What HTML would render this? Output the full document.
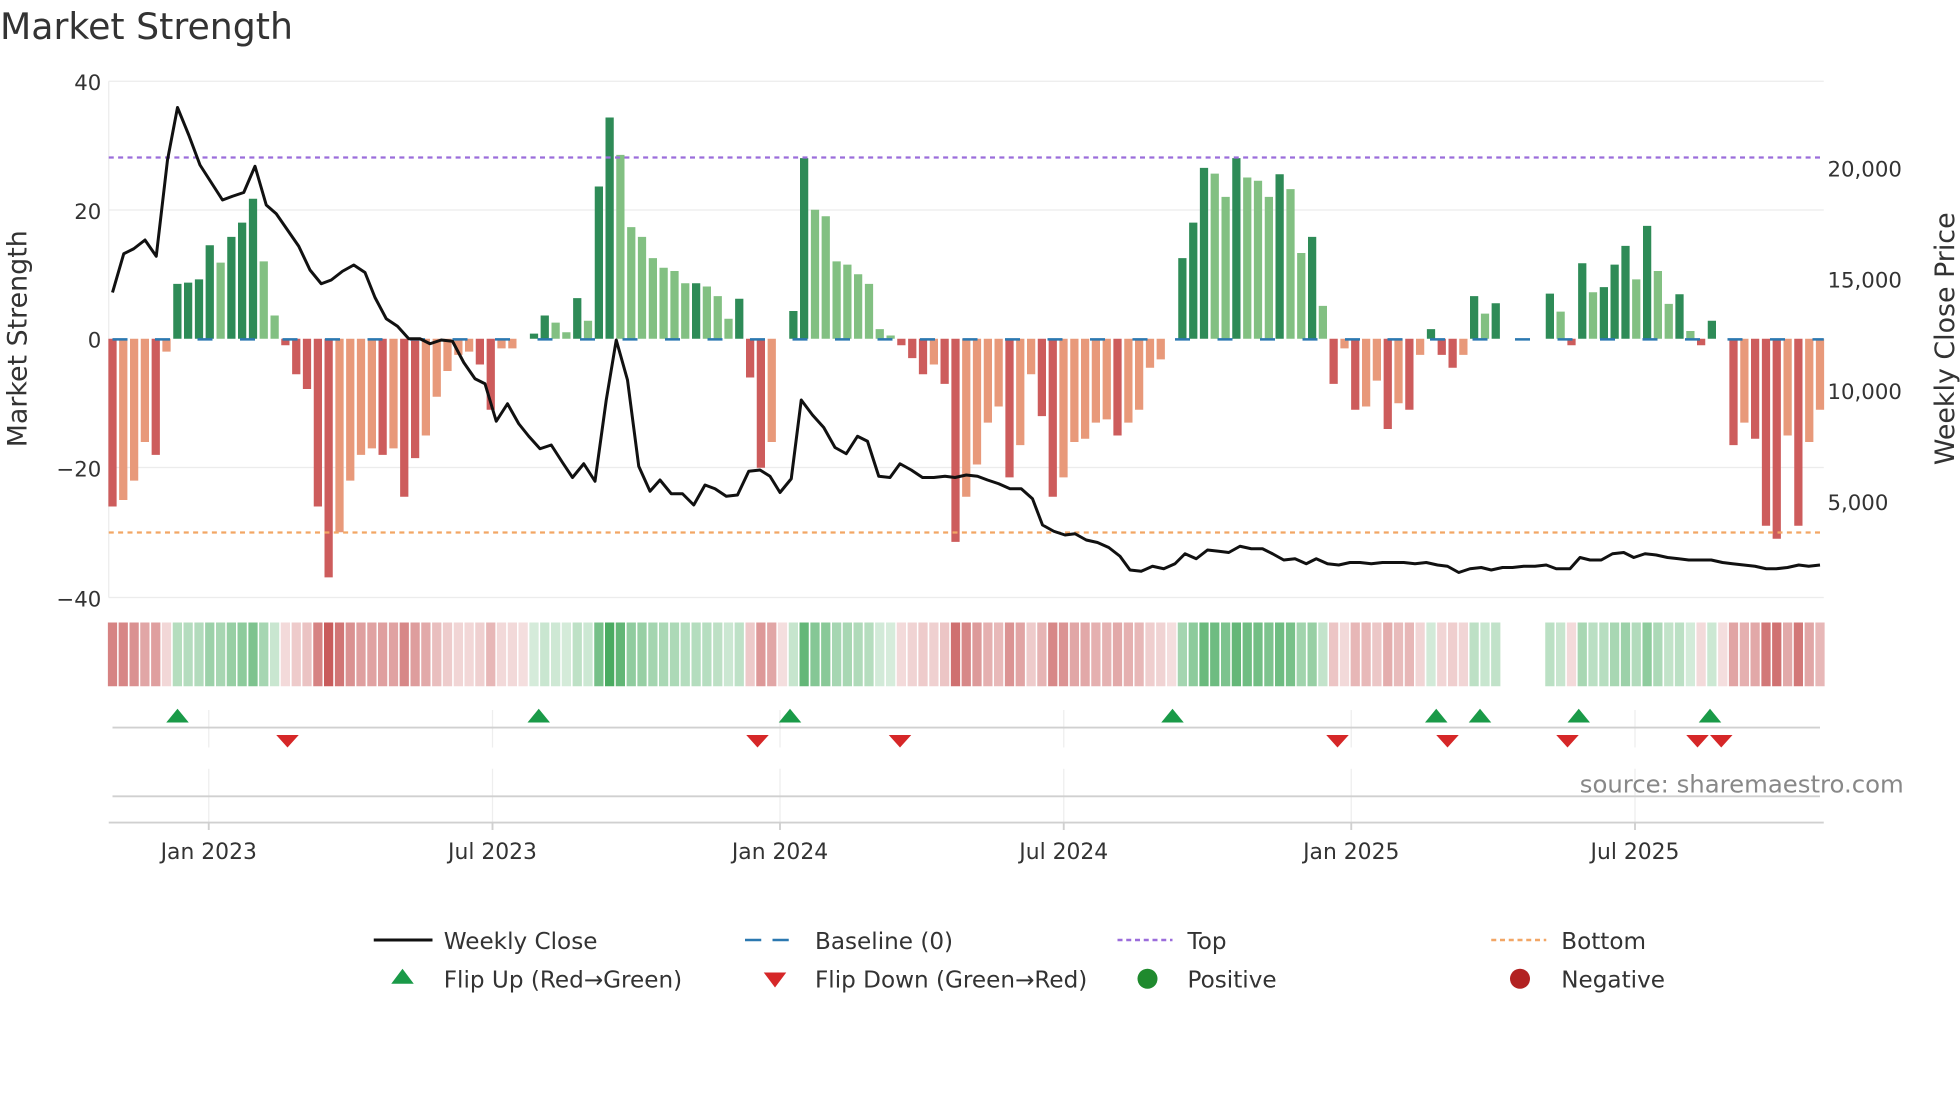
<!DOCTYPE html>
<html><head><meta charset="utf-8"><style>
html,body{margin:0;padding:0;background:#fff;width:1960px;height:1102px;overflow:hidden}
svg{display:block}
text{font-family:"DejaVu Sans","Liberation Sans",sans-serif;fill:#333}
</style></head><body>
<svg id="s" width="1960" height="1102" viewBox="0 0 1568 881.6" xmlns="http://www.w3.org/2000/svg">
<text x="0" y="31" font-size="29">Market Strength</text>
<g stroke="#ececec" stroke-width="1">
<line x1="87" y1="65" x2="1459" y2="65"/><line x1="87" y1="168" x2="1459" y2="168"/>
<line x1="87" y1="374" x2="1459" y2="374"/><line x1="87" y1="478" x2="1459" y2="478"/>
<line x1="87" y1="65" x2="87" y2="478"/>
</g>
<g font-size="17" text-anchor="end">
<text x="81" y="72">40</text><text x="81" y="175">20</text><text x="81" y="278">0</text>
<text x="81" y="381">−20</text><text x="81" y="485">−40</text>
</g>
<g font-size="17">
<text x="1462" y="141">20,000</text><text x="1462" y="230">15,000</text>
<text x="1462" y="319">10,000</text><text x="1462" y="408">5,000</text>
</g>
<text transform="translate(21,271) rotate(-90)" font-size="21.5" text-anchor="middle">Market Strength</text>
<text transform="translate(1563,271) rotate(-90)" font-size="21.5" text-anchor="middle">Weekly Close Price</text>
<g id="bars"></g>
<g id="heat"></g>
<line x1="87" y1="126" x2="1459" y2="126" stroke="#9b6ddb" stroke-width="1.8" stroke-dasharray="4,3.5"/>
<line x1="87" y1="426" x2="1459" y2="426" stroke="#f2a665" stroke-width="1.8" stroke-dasharray="4,3.5"/>
<line x1="90" y1="271.5" x2="1459" y2="271.5" stroke="#2b78b0" stroke-width="2" stroke-dasharray="12,22"/>
<polyline id="ln" fill="none" stroke="#111" stroke-width="2.4" stroke-linejoin="round"/>
<g stroke="#eee" stroke-width="1">
<line x1="167" y1="568" x2="167" y2="598"/><line x1="394" y1="568" x2="394" y2="598"/><line x1="624" y1="568" x2="624" y2="598"/><line x1="851" y1="568" x2="851" y2="598"/><line x1="1081" y1="568" x2="1081" y2="598"/><line x1="1308" y1="568" x2="1308" y2="598"/>
<line x1="167" y1="615" x2="167" y2="658"/><line x1="394" y1="615" x2="394" y2="658"/><line x1="624" y1="615" x2="624" y2="658"/><line x1="851" y1="615" x2="851" y2="658"/><line x1="1081" y1="615" x2="1081" y2="658"/><line x1="1308" y1="615" x2="1308" y2="658"/>
</g>
<g stroke="#d0d0d0" stroke-width="1.5">
<line x1="90" y1="582" x2="1456" y2="582"/><line x1="90" y1="637" x2="1456" y2="637"/><line x1="87" y1="658" x2="1459" y2="658"/>
<line x1="167" y1="658" x2="167" y2="664"/><line x1="394" y1="658" x2="394" y2="664"/><line x1="624" y1="658" x2="624" y2="664"/><line x1="851" y1="658" x2="851" y2="664"/><line x1="1081" y1="658" x2="1081" y2="664"/><line x1="1308" y1="658" x2="1308" y2="664"/>
</g>
<g id="flips"></g>
<text x="1523" y="634" font-size="19.5" text-anchor="end" style="fill:#888">source: sharemaestro.com</text>
<g font-size="17.5" text-anchor="middle">
<text x="167" y="687">Jan 2023</text><text x="394" y="687">Jul 2023</text><text x="624" y="687">Jan 2024</text><text x="851" y="687">Jul 2024</text><text x="1081" y="687">Jan 2025</text><text x="1308" y="687">Jul 2025</text>
</g>
<g font-size="18.5">
<line x1="299" y1="752" x2="346" y2="752" stroke="#111" stroke-width="2.4"/><text x="355" y="759">Weekly Close</text>
<line x1="596" y1="752" x2="640" y2="752" stroke="#2b78b0" stroke-width="2" stroke-dasharray="13,9"/><text x="652" y="759">Baseline (0)</text>
<line x1="894" y1="752" x2="938" y2="752" stroke="#9b6ddb" stroke-width="2" stroke-dasharray="4,3"/><text x="950" y="759">Top</text>
<line x1="1193" y1="752" x2="1237" y2="752" stroke="#f2a665" stroke-width="2" stroke-dasharray="4,3"/><text x="1249" y="759">Bottom</text>
<polygon points="313,787 331,787 322,775" fill="#1a9a48"/><text x="355" y="790">Flip Up (Red→Green)</text>
<polygon points="611,778 629,778 620,790" fill="#d62728"/><text x="652" y="790">Flip Down (Green→Red)</text>
<circle cx="918" cy="783" r="8" fill="#1f8a2e"/><text x="950" y="790">Positive</text>
<circle cx="1216" cy="783" r="8" fill="#b22222"/><text x="1249" y="790">Negative</text>
</g>
</svg>
<script>
var V=[[-26,1],[-25,0],[-22,0],[-16,0],[-18,1],[-2,0],[8.5,1],[8.7,1],[9.2,1],[14.5,1],[11.8,0],[15.8,1],[18,1],[21.7,1],[12,0],[3.6,0],[-1,1],[-5.5,1],[-7.8,1],[-26,1],[-37,1],[-30,0],[-22,0],[-18,0],[-17,0],[-18,1],[-17,0],[-24.5,1],[-18.5,1],[-15,0],[-9,0],[-5,0],[-2.5,0],[-2,0],[-4,1],[-11,1],[-1.5,0],[-1.5,0],[0,0],[0.8,1],[3.6,1],[2.5,0],[1,0],[6.3,1],[2.8,0],[23.6,1],[34.3,1],[28.5,0],[17.3,0],[15.8,0],[12.5,0],[11,0],[10.5,0],[8.6,0],[8.6,1],[8.1,0],[6.6,0],[3.1,0],[6.2,1],[-6,1],[-20,1],[-16,0],[0,0],[4.3,1],[28,1],[20,0],[19,0],[12,0],[11.5,0],[10,0],[8.5,0],[1.5,0],[0.5,0],[-1,1],[-3,1],[-5.5,1],[-4,0],[-7,1],[-31.5,1],[-24.5,0],[-19.5,0],[-13,0],[-10.5,0],[-21.5,1],[-16.5,0],[-5.5,0],[-12,1],[-24.5,1],[-21.5,0],[-16,0],[-15.5,0],[-13,0],[-12.5,0],[-15,1],[-13,0],[-11,0],[-4.5,0],[-3.2,0],[0,0],[12.5,1],[18,1],[26.5,1],[25.6,0],[22,0],[28,1],[25,0],[24.5,0],[22,0],[25.5,1],[23.2,0],[13.3,0],[15.8,1],[5.1,0],[-7,1],[-1.5,0],[-11,1],[-10.5,0],[-6.5,0],[-14,1],[-10,0],[-11,1],[-2.5,0],[1.5,1],[-2.5,1],[-4.5,1],[-2.5,0],[6.6,1],[3.9,0],[5.5,1],[null,0],[null,0],[null,0],[null,0],[7,1],[4.2,0],[-1,1],[11.7,1],[7.2,0],[8,1],[11.5,1],[14.4,1],[9.2,0],[17.5,1],[10.5,0],[5.4,0],[6.9,1],[1.2,0],[-1,1],[2.8,1],[0,0],[-16.5,1],[-13,0],[-15.5,1],[-29,1],[-31,1],[-15,0],[-29,1],[-16,0],[-11,0]];
var N=V.length,dx=1366/(N-1),b="",h="";
function mix(c,t){return "rgb("+c.map(function(x){return Math.round(255+(x-255)*t)}).join(",")+")"}
for(var i=0;i<N;i++){var x=90+i*dx,v=V[i][0];
if(v===null){continue}
var y0=271,hgt=Math.abs(v)*5.16,col=v>=0?(V[i][1]?"#2e8b57":"#82c082"):(V[i][1]?"#cd5c5c":"#e8997a");
if(v!==0)b+='<rect x="'+(x-3.3).toFixed(1)+'" y="'+(v>0?y0-hgt:y0).toFixed(1)+'" width="6.6" height="'+hgt.toFixed(1)+'" fill="'+col+'"/>';
var t=Math.min(1,0.2+Math.abs(v)/40*0.85);
var hc=v>0?mix([60,165,85],t):(v<0?mix([200,90,90],t):mix([200,90,90],0.2));
h+='<rect x="'+(x-3.7).toFixed(1)+'" y="498" width="7.4" height="51" fill="'+hc+'"/>';}
document.getElementById("bars").innerHTML=b;document.getElementById("heat").innerHTML=h;
var P="90,234 99,203 107,199 116,192 125,205 134,128 142,86 151,108 160,132 169,146 178,160 186,157 195,154 204,133 213,164 221,171 230,184 239,197 248,216 257,227 265,224 274,217 283,212 292,218 300,238 309,255 318,261 327,271 336,271 344,275 353,272 362,273 371,290 380,303 388,307 397,337 406,323 415,339 423,349 432,359 441,356 450,370 458,382 467,371 476,385 485,320 493,272 502,304 511,373 520,393 528,384 537,395 546,395 555,404 564,388 572,391 581,397 590,396 599,377 608,376 616,381 624,394 633,383 641,320 650,332 659,342 668,358 677,363 686,349 694,353 703,381 712,382 720,371 729,376 738,382 747,382 756,381 764,382 773,380 782,381 790,384 799,387 808,391 817,391 826,399 834,420 843,425 852,428 860,427 869,432 878,434 887,438 896,445 904,456 913,457 922,453 931,455 940,451 948,443 957,447 966,440 975,441 983,442 992,437 1001,439 1010,439 1018,443 1027,448 1036,447 1045,451 1053,447 1062,451 1071,452 1080,450 1088,450 1097,451 1106,450 1115,450 1123,450 1132,451 1141,450 1150,452 1158,453 1167,458 1176,455 1185,454 1193,456 1202,454 1210,454 1219,453 1228,453 1237,452 1245,455 1256,455 1264,446 1272,448 1281,448 1290,443 1299,442 1307,446 1316,443 1325,444 1334,446 1343,447 1351,448 1360,448 1369,448 1378,450 1386,451 1395,452 1404,453 1413,455 1421,455 1430,454 1439,452 1447,453 1456,452";
document.getElementById("ln").setAttribute("points",P);
var f="";[142,431,632,938,1149,1184,1263,1368].forEach(function(x){f+='<polygon points="'+(x-9)+',578 '+(x+9)+',578 '+x+',567" fill="#1a9a48"/>'});
[230,606,720,1070,1158,1254,1358,1377].forEach(function(x){f+='<polygon points="'+(x-9)+',588 '+(x+9)+',588 '+x+',598" fill="#d62728"/>'});
document.getElementById("flips").innerHTML=f;
</script>
</body></html>
